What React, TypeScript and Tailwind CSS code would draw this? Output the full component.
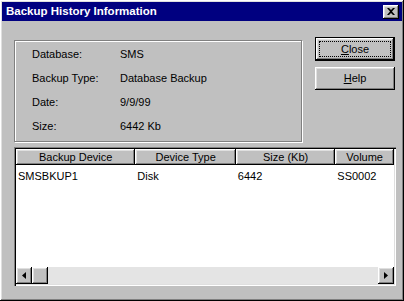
import React from "react";

const raised =
  "shadow-[inset_-1px_-1px_0_#000,inset_1px_1px_0_#fff,inset_-2px_-2px_0_#808080,inset_2px_2px_0_#dfdfdf]";

const info = [
  { label: "Database:", value: "SMS" },
  { label: "Backup Type:", value: "Database Backup" },
  { label: "Date:", value: "9/9/99" },
  { label: "Size:", value: "6442 Kb" },
];

const columns = [
  { title: "Backup Device", width: "w-[120px]" },
  { title: "Device Type", width: "w-[101px]" },
  { title: "Size (Kb)", width: "w-[100px]" },
  { title: "Volume", width: "w-[59px]" },
];

const row = ["SMSBKUP1", "Disk", "6442", "SS0002"];

export default function App() {
  return (
    <div
      className={`w-[404px] h-[301px] bg-[#c0c0c0] p-[2px] text-[11px] text-black overflow-hidden ${raised}`}
      style={{ fontFamily: '"Liberation Sans", Arial, sans-serif' }}
    >
      {/* title bar */}
      <div className="h-[19px] bg-[#000080] flex items-center justify-between pl-[4px] pr-[3px]">
        <span className="text-white font-bold text-[11.5px]">Backup History Information</span>
        <div className={`w-[16px] h-[14px] bg-[#c0c0c0] flex items-center justify-center ${raised}`}>
          <svg width="8" height="7" viewBox="0 0 8 7">
            <path d="M0 0h2l2 2 2-2h2L5 3.5 8 7H6L4 5 2 7H0l3-3.5z" fill="#000" />
          </svg>
        </div>
      </div>

      <div className="pl-[12px] pt-[19px]">
        <div className="flex">
          {/* group box */}
          <div className="w-[288px] h-[102px] border border-[#808080] shadow-[1px_1px_0_#fff,inset_1px_1px_0_#fff] pt-[1px]">
            {info.map((item) => (
              <div key={item.label} className="flex items-center h-[24px]">
                <span className="ml-[17px] w-[88px]">{item.label}</span>
                <span>{item.value}</span>
              </div>
            ))}
          </div>

          {/* buttons */}
          <div className="ml-[13px] -mt-[3px] flex flex-col gap-[6px]">
            <div className="w-[80px] h-[24px] border border-black">
              <div className={`w-full h-full flex items-center justify-center p-[3px] ${raised}`}>
                <div className="w-full h-full border border-dotted border-black flex items-center justify-center">
                  <span>
                    <span className="underline">C</span>lose
                  </span>
                </div>
              </div>
            </div>
            <div className={`w-[80px] h-[23px] flex items-center justify-center ${raised}`}>
              <span>
                <span className="underline">H</span>elp
              </span>
            </div>
          </div>
        </div>

        {/* list view */}
        <div className="mt-[5px] w-[382px] h-[139px] bg-white flex flex-col shadow-[inset_1px_1px_0_#808080,inset_2px_2px_0_#000,inset_-1px_-1px_0_#fff,inset_-2px_-2px_0_#dfdfdf] p-[2px]">
          <div className="flex h-[16px] bg-[#c0c0c0] shrink-0">
            {columns.map((c) => (
              <div
                key={c.title}
                className={`${c.width} h-full flex items-center justify-center ${raised}`}
              >
                {c.title}
              </div>
            ))}
            <div className={`flex-1 h-full ${raised}`} />
          </div>
          <div className="flex-1 pt-[4px]">
            <div className="flex h-[14px] items-center">
              {row.map((v, i) => (
                <span key={i} className={`${columns[i].width} pl-[2px]`}>
                  {v}
                </span>
              ))}
            </div>
          </div>
          {/* scrollbar */}
          <div className="flex h-[17px] bg-[#e4e4e4] shrink-0 items-start">
            <div className={`w-[16px] h-[17px] bg-[#c0c0c0] flex items-center justify-center ${raised}`}>
              <svg width="4" height="7" viewBox="0 0 4 7">
                <path d="M4 0v7L0 3.5z" fill="#000" />
              </svg>
            </div>
            <div className={`w-[16px] h-[17px] bg-[#c0c0c0] ${raised}`} />
            <div className="flex-1" />
            <div className={`w-[16px] h-[17px] bg-[#c0c0c0] flex items-center justify-center ${raised}`}>
              <svg width="4" height="7" viewBox="0 0 4 7">
                <path d="M0 0v7l4-3.5z" fill="#000" />
              </svg>
            </div>
          </div>
        </div>
      </div>
    </div>
  );
}
